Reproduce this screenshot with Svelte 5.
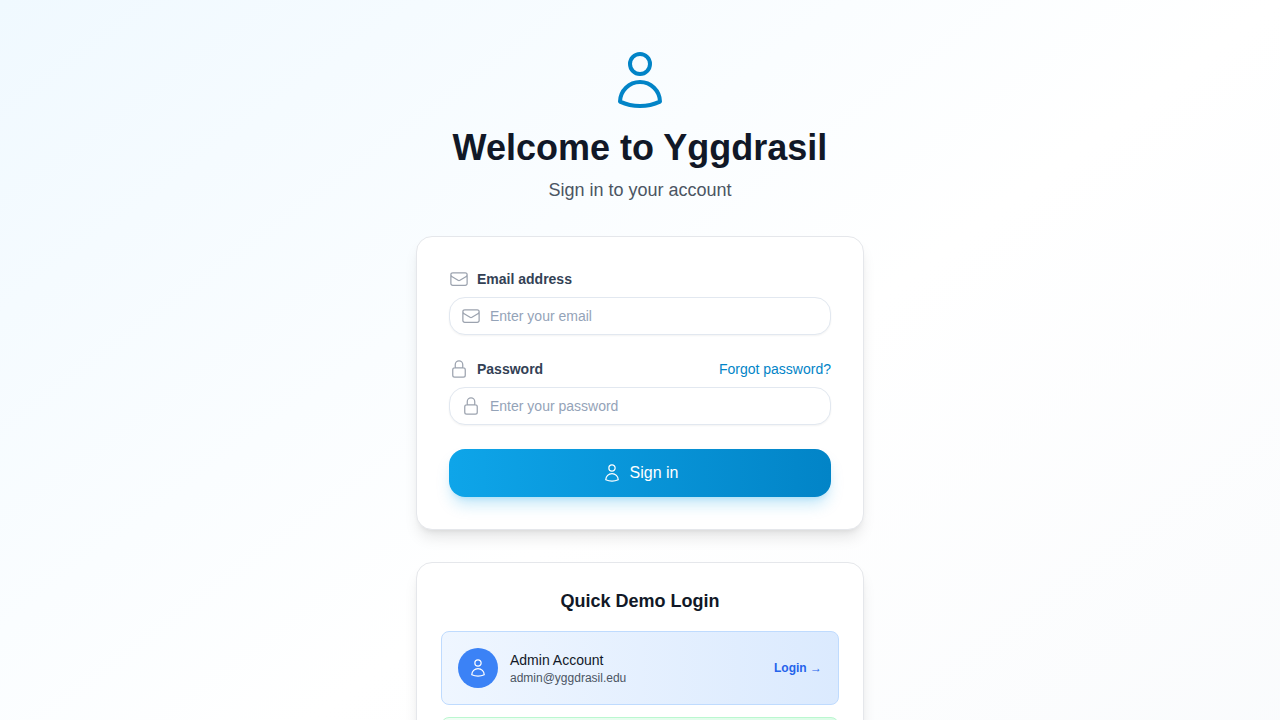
<script>
  let email = $state('');
  let password = $state('');

  const accounts = [
    { tone: 'blue', name: 'Admin Account', email: 'admin@yggdrasil.edu' },
    { tone: 'green' },
    { tone: 'green' },
  ];

  function signIn(event) {
    event.preventDefault();
  }

  function fill(account) {
    email = account.email;
  }
</script>

{#snippet user(size)}
  <svg class="icon {size}" viewBox="0 0 24 24" aria-hidden="true">
    <path d="M15.75 6a3.75 3.75 0 1 1-7.5 0 3.75 3.75 0 0 1 7.5 0ZM4.501 20.118a7.5 7.5 0 0 1 14.998 0A17.933 17.933 0 0 1 12 21.75c-2.676 0-5.216-.584-7.499-1.632Z" />
  </svg>
{/snippet}

{#snippet envelope()}
  <svg class="icon" viewBox="0 0 24 24" aria-hidden="true">
    <path d="M21.75 6.75v10.5a2.25 2.25 0 0 1-2.25 2.25h-15a2.25 2.25 0 0 1-2.25-2.25V6.75m19.5 0A2.25 2.25 0 0 0 19.5 4.5h-15a2.25 2.25 0 0 0-2.25 2.25m19.5 0v.243a2.25 2.25 0 0 1-1.07 1.916l-7.5 4.615a2.25 2.25 0 0 1-2.36 0L3.32 8.91a2.25 2.25 0 0 1-1.07-1.916V6.75" />
  </svg>
{/snippet}

{#snippet lock()}
  <svg class="icon" viewBox="0 0 24 24" aria-hidden="true">
    <path d="M16.5 10.5V6.75a4.5 4.5 0 1 0-9 0v3.75m-.75 11.25h10.5a2.25 2.25 0 0 0 2.25-2.25v-6.75a2.25 2.25 0 0 0-2.25-2.25H6.75a2.25 2.25 0 0 0-2.25 2.25v6.75a2.25 2.25 0 0 0 2.25 2.25Z" />
  </svg>
{/snippet}

<main class="page">
  <div class="column">
    <header>
      {@render user('large')}
      <h1>Welcome to Yggdrasil</h1>
      <p>Sign in to your account</p>
    </header>

    <form class="card" onsubmit={signIn}>
      <div class="field">
        <div class="field-head">
          <label for="email">{@render envelope()}Email address</label>
        </div>
        <div class="control">
          {@render envelope()}
          <input id="email" type="email" placeholder="Enter your email" bind:value={email} />
        </div>
      </div>

      <div class="field">
        <div class="field-head">
          <label for="password">{@render lock()}Password</label>
          <a href="#forgot">Forgot password?</a>
        </div>
        <div class="control">
          {@render lock()}
          <input id="password" type="password" placeholder="Enter your password" bind:value={password} />
        </div>
      </div>

      <button class="submit" type="submit">{@render user('')}Sign in</button>
    </form>

    <section class="card demo">
      <h2>Quick Demo Login</h2>
      <ul>
        {#each accounts as account}
          <li class={account.tone}>
            {#if account.name}
              <button type="button" onclick={() => fill(account)}>
                <span class="avatar">{@render user('')}</span>
                <span class="who">
                  <span class="name">{account.name}</span>
                  <span class="mail">{account.email}</span>
                </span>
                <span class="go">Login →</span>
              </button>
            {/if}
          </li>
        {/each}
      </ul>
    </section>
  </div>
</main>

<style>
  :global(body) {
    margin: 0;
  }

  .page,
  .page * {
    box-sizing: border-box;
  }

  .page {
    display: flex;
    justify-content: center;
    min-height: 100vh;
    padding: 48px 16px;
    background: linear-gradient(to bottom right, #f0f9ff, #ffffff, #f8fafc);
    color: #111827;
    font-family: 'Liberation Sans', Arial, sans-serif;
    font-size: 14px;
    line-height: 20px;
  }

  .column {
    display: flex;
    flex-direction: column;
    gap: 32px;
    width: 100%;
    max-width: 448px;
  }

  .icon {
    flex: none;
    width: 20px;
    height: 20px;
    fill: none;
    stroke: currentColor;
    stroke-width: 1.5;
    stroke-linecap: round;
    stroke-linejoin: round;
  }

  .icon.large {
    width: 64px;
    height: 64px;
    color: #0284c7;
  }

  header {
    display: flex;
    flex-direction: column;
    align-items: center;
    text-align: center;
  }

  h1,
  h2,
  p,
  ul {
    margin: 0;
    padding: 0;
  }

  h1 {
    margin-top: 16px;
    font-size: 36px;
    line-height: 40px;
  }

  header p {
    margin-top: 8px;
    color: #4b5563;
    font-size: 18px;
    line-height: 28px;
  }

  .card {
    display: flex;
    flex-direction: column;
    gap: 24px;
    padding: 32px;
    border: 1px solid #e5e7eb;
    border-radius: 16px;
    background: #ffffff;
    box-shadow: 0 10px 15px -3px rgb(0 0 0 / 10%), 0 4px 6px -4px rgb(0 0 0 / 10%);
  }

  .field {
    display: flex;
    flex-direction: column;
    gap: 8px;
  }

  .field-head {
    display: flex;
    align-items: center;
    justify-content: space-between;
  }

  label {
    display: flex;
    align-items: center;
    gap: 8px;
    color: #334155;
    font-weight: 700;
  }

  label .icon,
  .control .icon {
    color: #9ca3af;
  }

  a {
    color: #0284c7;
    text-decoration: none;
  }

  .control {
    display: flex;
    align-items: center;
    gap: 9px;
    padding: 0 12px 0 11px;
    border: 1px solid #e2e8f0;
    border-radius: 16px;
    background: #ffffff;
    box-shadow: 0 1px 2px rgb(0 0 0 / 5%);
  }

  .control:focus-within {
    border-color: #0ea5e9;
  }

  input {
    flex: 1;
    min-width: 0;
    height: 36px;
    padding: 0;
    border: 0;
    outline: 0;
    background: transparent;
    color: #0f172a;
    font: inherit;
  }

  input::placeholder {
    color: #94a3b8;
    opacity: 1;
  }

  button {
    border: 0;
    font: inherit;
    cursor: pointer;
  }

  .submit {
    display: flex;
    align-items: center;
    justify-content: center;
    gap: 8px;
    padding: 12px 24px;
    border-radius: 16px;
    background: linear-gradient(to right, #0ea5e9, #0284c7);
    box-shadow: 0 10px 15px -3px rgb(14 165 233 / 25%), 0 4px 6px -4px rgb(14 165 233 / 25%);
    color: #ffffff;
    font-size: 16px;
    line-height: 24px;
  }

  .demo {
    gap: 16px;
    padding: 24px;
  }

  h2 {
    font-size: 18px;
    line-height: 28px;
    text-align: center;
  }

  ul {
    display: flex;
    flex-direction: column;
    gap: 12px;
    list-style: none;
  }

  li {
    min-height: 74px;
    border: 1px solid;
    border-radius: 8px;
  }

  .blue {
    border-color: #bfdbfe;
    background: linear-gradient(to right, #eff6ff, #dbeafe);
  }

  .green {
    border-color: #bbf7d0;
    background: linear-gradient(to right, #f0fdf4, #dcfce7);
  }

  li button {
    display: flex;
    align-items: center;
    gap: 12px;
    width: 100%;
    padding: 16px;
    background: transparent;
    color: inherit;
    text-align: left;
  }

  .avatar {
    display: grid;
    place-items: center;
    width: 40px;
    height: 40px;
    border-radius: 50%;
    background: #3b82f6;
    color: #ffffff;
  }

  .who {
    display: flex;
    flex: 1;
    flex-direction: column;
  }

  .mail,
  .go {
    font-size: 12px;
    line-height: 16px;
  }

  .mail {
    color: #4b5563;
  }

  .go {
    color: #2563eb;
    font-weight: 700;
  }
</style>
